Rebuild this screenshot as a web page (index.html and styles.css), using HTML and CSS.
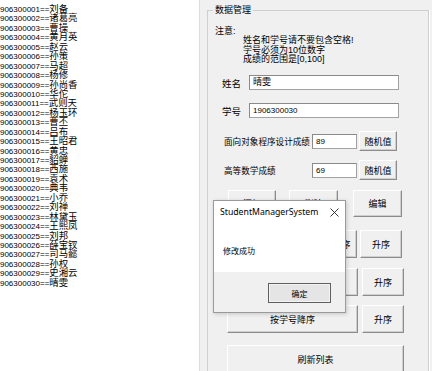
FILE: index.html
```html
<!DOCTYPE html>
<html lang="zh-CN">
<head>
<meta charset="utf-8">
<title>StudentManagerSystem</title>
<link rel="stylesheet" href="styles.css">
</head>
<body>
<div class="list">
  <div class="item">1906300001==<span class="nm">刘备</span></div>
  <div class="item">1906300002==<span class="nm">诸葛亮</span></div>
  <div class="item">1906300003==<span class="nm">曹操</span></div>
  <div class="item">1906300004==<span class="nm">黄月英</span></div>
  <div class="item">1906300005==<span class="nm">赵云</span></div>
  <div class="item">1906300006==<span class="nm">孙策</span></div>
  <div class="item">1906300007==<span class="nm">马超</span></div>
  <div class="item">1906300008==<span class="nm">杨修</span></div>
  <div class="item">1906300009==<span class="nm">孙尚香</span></div>
  <div class="item">1906300010==<span class="nm">华佗</span></div>
  <div class="item">1906300011==<span class="nm">武则天</span></div>
  <div class="item">1906300012==<span class="nm">杨玉环</span></div>
  <div class="item">1906300013==<span class="nm">曹丕</span></div>
  <div class="item">1906300014==<span class="nm">吕布</span></div>
  <div class="item">1906300015==<span class="nm">王昭君</span></div>
  <div class="item">1906300016==<span class="nm">黄忠</span></div>
  <div class="item">1906300017==<span class="nm">貂蝉</span></div>
  <div class="item">1906300018==<span class="nm">西施</span></div>
  <div class="item">1906300019==<span class="nm">袁术</span></div>
  <div class="item">1906300020==<span class="nm">典韦</span></div>
  <div class="item">1906300021==<span class="nm">小乔</span></div>
  <div class="item">1906300022==<span class="nm">刘禅</span></div>
  <div class="item">1906300023==<span class="nm">林黛玉</span></div>
  <div class="item">1906300024==<span class="nm">王熙凤</span></div>
  <div class="item">1906300025==<span class="nm">刘邦</span></div>
  <div class="item">1906300026==<span class="nm">薛宝钗</span></div>
  <div class="item">1906300027==<span class="nm">司马懿</span></div>
  <div class="item">1906300028==<span class="nm">孙权</span></div>
  <div class="item">1906300029==<span class="nm">史湘云</span></div>
  <div class="item">1906300030==<span class="nm">晴雯</span></div>
</div>

<div class="panel">
  <fieldset class="group">
    <legend class="group-title">数据管理</legend>
    <div class="notice-head">注意:</div>
    <div class="notice-lines">
      <div>姓名和学号请不要包含空格!</div>
      <div>学号必须为10位数字</div>
      <div>成绩的范围是[0,100]</div>
    </div>

    <div class="field-row row-name">
      <span class="label">姓名</span>
      <div class="input wide cjk">晴雯</div>
    </div>
    <div class="field-row row-id">
      <span class="label">学号</span>
      <div class="input wide">1906300030</div>
    </div>
    <div class="score-row row-s1">
      <span class="score-label">面向对象程序设计成绩</span>
      <div class="input small">89</div>
      <button class="btn rand">随机值</button>
    </div>
    <div class="score-row row-s2">
      <span class="score-label">高等数学成绩</span>
      <div class="input small">69</div>
      <button class="btn rand">随机值</button>
    </div>

    <div class="btn-row row1">
      <button class="btn b1">添加</button>
      <button class="btn b2">删除</button>
      <button class="btn b3">编辑</button>
    </div>
    <div class="btn-row row2">
      <button class="btn long l2">按面向对象程序设计成绩降序</button>
      <button class="btn asc a2">升序</button>
    </div>
    <div class="btn-row row3">
      <button class="btn long">按高等数学成绩降序</button>
      <button class="btn asc">升序</button>
    </div>
    <div class="btn-row row4">
      <button class="btn long">按学号降序</button>
      <button class="btn asc">升序</button>
    </div>
    <div class="btn-row row5">
      <button class="btn full">刷新列表</button>
    </div>
  </fieldset>
</div>

<div class="dialog">
  <div class="dlg-title">
    <span class="dlg-name">StudentManagerSystem</span>
    <svg class="dlg-close" width="9" height="9" viewBox="0 0 9 9"><path d="M0.5 0.5 L8.5 8.5 M8.5 0.5 L0.5 8.5" stroke="#222" stroke-width="0.9" fill="none"/></svg>
  </div>
  <div class="dlg-body">修改成功</div>
  <div class="dlg-foot">
    <button class="dlg-ok">确定</button>
  </div>
</div>
</body>
</html>
```

FILE: styles.css
```css
* { box-sizing: border-box; }
html, body { margin: 0; padding: 0; }
body {
  width: 432px;
  height: 371px;
  overflow: hidden;
  display: flex;
  position: relative;
  background: #f0f0f0;
  color: #000;
  font-family: "Liberation Sans", "Noto Sans CJK SC", sans-serif;
}

/* left list */
.list {
  width: 200px;
  flex: none;
  background: #fff;
  border-right: 1px solid #dcdcdc;
  padding-top: 4px;
  overflow: hidden;
  white-space: nowrap;
  font-size: 8px;
}
.item {
  height: 9.45px;
  line-height: 9.45px;
  text-indent: -4.5px;
}
.item .nm { font-size: 9.4px; font-family: "Noto Sans CJK SC", sans-serif; }

/* right panel */
.panel {
  flex: 1;
  padding: 4px 3px 0 7px;
}
.group {
  margin: 0;
  padding: 0;
  min-width: 0;
  border: 1px solid #cfcfcf;
  box-shadow: 1px 0 0 #fff;
  font-size: 9px;
}
.group-title {
  margin-left: 5px;
  padding: 0 2px;
  font-size: 9px;
  line-height: 12px;
}
.notice-head {
  margin-top: 10px;
  padding-left: 7px;
  line-height: 10px;
}
.notice-lines {
  padding-left: 35px;
  line-height: 9.7px;
}

.input {
  height: 15px;
  background: #fff;
  border: 1px solid #a2a2a2;
  border-top-color: #8a8a8a;
  border-left-color: #8a8a8a;
  font-size: 8px;
  line-height: 13px;
  padding-left: 3px;
  white-space: nowrap;
}
.input.cjk { font-size: 9px; }
.input.wide { width: 150px; }
.input.small { width: 45px; }

.field-row {
  display: flex;
  align-items: center;
  padding-left: 14px;
}
.field-row .label {
  width: 27px;
  font-size: 9.5px;
}
.row-name { margin-top: 10px; }
.row-id { margin-top: 13px; }

.score-row {
  display: flex;
  align-items: center;
  padding-left: 16px;
  gap: 2px;
}
.score-label { width: 86px; font-size: 8.6px; white-space: nowrap; }
.row-s1 { margin-top: 13px; }
.row-s2 { margin-top: 9px; }

.btn {
  margin: 0;
  padding: 0;
  background: #f0f0f0;
  border: 1px solid #fff;
  border-right-color: #8c8c8c;
  border-bottom-color: #8c8c8c;
  box-shadow: inset -1px -1px 0 #cfcfcf;
  font-family: "Noto Sans CJK SC", sans-serif;
  font-size: 9px;
  color: #000;
  white-space: nowrap;
  overflow: hidden;
}
.btn.rand { width: 38px; height: 20px; }

.btn-row {
  display: flex;
  padding-left: 19px;
  gap: 4px;
}
.btn-row .btn { height: 28px; }
.row1 { margin-top: 10px; padding-left: 20px; }
.row1 .btn { height: 27px; }
.b1 { width: 48px; }
.b2 { width: 49px; margin-left: 9px; }
.b3 { width: 49px; margin-left: 11px; }
.row2 { margin-top: 13px; gap: 3px; }
.row3 { margin-top: 10px; }
.row4 { margin-top: 9px; }
.row5 { margin-top: 12px; }
.long { width: 131px; }
.l2 { width: 130px; }
.asc { width: 42px; }
.full { width: 177px; }

/* message box */
.dialog {
  position: absolute;
  left: 213px;
  top: 200px;
  width: 133px;
  height: 113px;
  background: #fff;
  border: 1px solid #9a9a9a;
  box-shadow: 1px 1px 4px rgba(0, 0, 0, 0.18);
  display: flex;
  flex-direction: column;
}
.dlg-title {
  height: 22px;
  display: flex;
  align-items: center;
  justify-content: space-between;
  padding: 0 6px 0 6px;
}
.dlg-name {
  font-family: "Noto Sans", "Liberation Sans", sans-serif;
  font-size: 8.7px;
  line-height: 12px;
}
.dlg-close { display: block; }
.dlg-body {
  flex: 1;
  padding: 22px 0 0 9px;
  font-family: "Noto Sans CJK SC", sans-serif;
  font-size: 8px;
  line-height: 12px;
}
.dlg-foot {
  height: 40px;
  background: #f0f0f0;
  display: flex;
  justify-content: flex-end;
  align-items: flex-start;
  padding: 11px 14px 0 0;
}
.dlg-ok {
  width: 63px;
  height: 20px;
  margin: 0;
  padding: 0;
  background: #e5e5e5;
  border: 1px solid #5f5f5f;
  box-shadow: inset 0 0 0 1px #f4f4f4;
  font-family: "Noto Sans CJK SC", sans-serif;
  font-size: 8px;
  color: #000;
}
```
